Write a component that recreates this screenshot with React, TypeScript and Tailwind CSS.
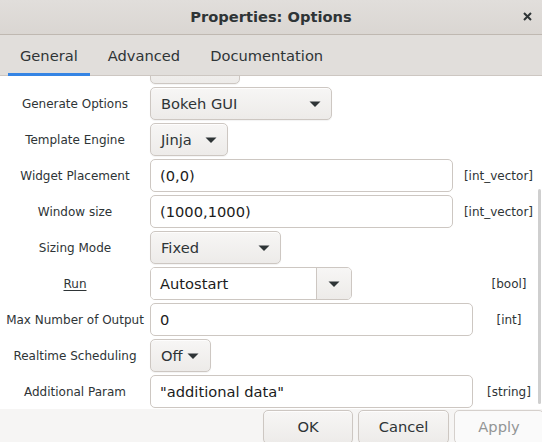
import React from 'react';

const font = { fontFamily: '"DejaVu Sans", "Liberation Sans", sans-serif' };

const btn =
  'flex items-center h-[33px] rounded-[5px] border border-[#cdc7c2] bg-linear-to-b from-[#f7f6f5] to-[#edebe9] shadow-[inset_0_1px_0_rgba(255,255,255,0.8),0_1px_1px_rgba(0,0,0,0.05)] text-[14.67px] text-[#2e3436]';
const entry =
  'flex items-center h-[33px] rounded-[5px] border border-[#cdc7c2] bg-white px-[9px] text-[14.67px] text-[#1c1c1c]';

function Arrow() {
  return (
    <svg width="12" height="6" viewBox="0 0 12 6" className="shrink-0">
      <path d="M0.5 0.5 L11.5 0.5 L6 6 Z" fill="#2e3436" />
    </svg>
  );
}

function Label({ children, underline }: { children: React.ReactNode; underline?: boolean }) {
  return (
    <div className="w-[150px] shrink-0 text-center text-[12px] text-[#2e3436]">
      <span className={underline ? 'underline underline-offset-2' : ''}>{children}</span>
    </div>
  );
}

function Type({ children }: { children: React.ReactNode }) {
  return (
    <div className="ml-auto min-w-[66px] px-[9px] text-center text-[12px] text-[#2e3436] whitespace-nowrap">
      {children}
    </div>
  );
}

function Dropdown({ value, width, tight }: { value: string; width: string; tight?: boolean }) {
  return (
    <div
      className={`${btn} ${width} pl-[10px] pr-[10px] ${tight ? 'gap-[4px]' : 'justify-between'}`}
    >
      <span>{value}</span>
      <Arrow />
    </div>
  );
}

export default function App() {
  return (
    <div className="w-[542px] h-[442px] overflow-hidden flex flex-col bg-white" style={font}>
      {/* Title bar */}
      <div className="relative h-[35px] shrink-0 flex items-center justify-center bg-linear-to-b from-[#e1dedb] to-[#dad6d2] border-b border-[#bfb8b1]">
        <span className="text-[14.67px] font-bold text-[#2e3436]">Properties: Options</span>
        <svg
          className="absolute right-[10px] top-[12px]"
          width="9"
          height="9"
          viewBox="0 0 9 9"
        >
          <path d="M1 1 L8 8 M8 1 L1 8" stroke="#2e3436" strokeWidth="2" />
        </svg>
      </div>

      {/* Tabs */}
      <div className="h-[41px] shrink-0 flex items-stretch gap-[6px] pl-[8px] bg-[#e1dedb] border-b border-[#cdc7c2]">
        <div className="relative flex items-center px-[12px] pt-[2px] text-[14.67px] text-[#2e3436]">
          General
          <div className="absolute left-0 right-0 bottom-[-1px] h-[3px] bg-[#3584e4]" />
        </div>
        <div className="flex items-center px-[12px] pt-[2px] text-[14.67px] text-[#2e3436]">Advanced</div>
        <div className="flex items-center px-[12px] pt-[2px] text-[14.67px] text-[#2e3436]">Documentation</div>
      </div>

      {/* Content */}
      <div className="relative h-[333px] shrink-0 overflow-hidden bg-white">
        <div className="flex flex-col gap-[3px] mt-[-25px]">
          <div className="flex items-center h-[33px]">
            <Label>Output Language</Label>
            <Dropdown value="Python" width="w-[90px]" />
          </div>
          <div className="flex items-center h-[33px]">
            <Label>Generate Options</Label>
            <Dropdown value="Bokeh GUI" width="w-[182px]" />
          </div>
          <div className="flex items-center h-[33px]">
            <Label>Template Engine</Label>
            <Dropdown value="Jinja" width="w-[78px]" />
          </div>
          <div className="flex items-center h-[33px]">
            <Label>Widget Placement</Label>
            <div className={`${entry} w-[303px]`}>(0,0)</div>
            <Type>[int_vector]</Type>
          </div>
          <div className="flex items-center h-[33px]">
            <Label>Window size</Label>
            <div className={`${entry} w-[303px]`}>(1000,1000)</div>
            <Type>[int_vector]</Type>
          </div>
          <div className="flex items-center h-[33px]">
            <Label>Sizing Mode</Label>
            <Dropdown value="Fixed" width="w-[131px]" />
          </div>
          <div className="flex items-center h-[33px]">
            <Label underline>Run</Label>
            <div className="flex h-[33px] w-[202px] rounded-[5px] border border-[#cdc7c2] overflow-hidden">
              <div className="flex-1 flex items-center bg-white px-[9px] text-[14.67px] text-[#1c1c1c]">
                Autostart
              </div>
              <div className="w-[35px] flex items-center justify-center border-l border-[#cdc7c2] bg-linear-to-b from-[#f7f6f5] to-[#edebe9]">
                <Arrow />
              </div>
            </div>
            <Type>[bool]</Type>
          </div>
          <div className="flex items-center h-[33px]">
            <Label>Max Number of Output</Label>
            <div className={`${entry} w-[323px]`}>0</div>
            <Type>[int]</Type>
          </div>
          <div className="flex items-center h-[33px]">
            <Label>Realtime Scheduling</Label>
            <Dropdown value="Off" width="w-[61px]" tight />
          </div>
          <div className="flex items-center h-[33px]">
            <Label>Additional Param</Label>
            <div className={`${entry} w-[323px]`}>"additional data"</div>
            <Type>[string]</Type>
          </div>
        </div>

        {/* overlay scrollbar indicator */}
        <div className="absolute right-[1px] top-[113px] bottom-[5px] w-[3px] rounded-full bg-[#cfcfcf]" />
      </div>

      {/* Action area */}
      <div className="flex-1 flex gap-[5px] pl-[263px] pt-[1px] bg-[#f6f5f4]">
        <div className={`${btn} w-[90px] h-[34px] justify-center shrink-0`}>OK</div>
        <div className={`${btn} w-[91px] h-[34px] justify-center shrink-0`}>Cancel</div>
        <div className="flex items-center justify-center shrink-0 w-[90px] h-[34px] rounded-[5px] border border-[#d5d0cc] bg-[#fafafa] text-[14.67px] text-[#929595]">
          Apply
        </div>
      </div>
    </div>
  );
}
